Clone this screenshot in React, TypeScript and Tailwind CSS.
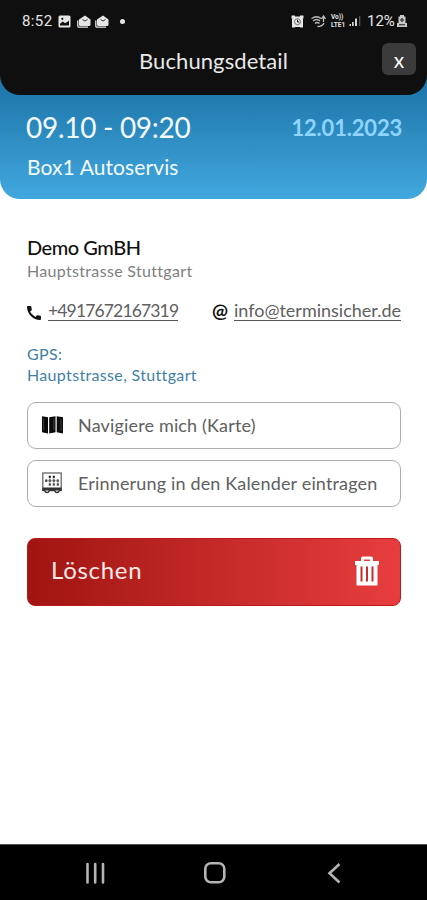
import type { ReactNode } from "react";

function StatusBar() {
  return (
    <div className="flex h-[42px] items-center justify-between pl-[22px] pr-[20px] font-['Roboto',sans-serif] text-[15px] text-[#e6e6e6]">
      <div className="flex items-center">
        <span className="w-[31px] tracking-[0.4px]">8:52</span>
        <svg className="ml-[5px]" width="13" height="13" viewBox="0 0 13 13" fill="#e6e6e6">
          <rect x="0.5" y="0.5" width="12" height="12" rx="1.5" />
          <path d="M2 10.5V8.8l2.8-2.2 2.3 1.7L11 5.8v4.7z" fill="#0f0f0f" />
          <circle cx="4.3" cy="3.8" r="1.1" fill="#0f0f0f" />
        </svg>
        <MailIcon className="ml-[6px]" />
        <MailIcon className="ml-[4px]" />
        <span className="ml-[11px] h-[5px] w-[5px] rounded-full bg-[#e6e6e6]" />
      </div>
      <div className="flex items-center">
        {/* alarm */}
        <svg width="13" height="13" viewBox="0 0 13 13" fill="#e6e6e6">
          <path d="M0.500 0.500h3.500v3H0.500zM9 0.500h3.500v3H9zM1 9.500h3v3H1zM9 9.500h3v3H9z" />
          <rect x="1" y="1.500" width="11" height="10.500" rx="3" />
          <circle cx="6.500" cy="6.700" r="3" fill="none" stroke="#555" strokeWidth="0.800" />
          <path d="M6.500 4.800v2.200h1.800" fill="none" stroke="#0f0f0f" strokeWidth="1" />
        </svg>
        {/* wifi calling */}
        <svg className="ml-[7px]" width="15" height="13" viewBox="0 0 15 13" fill="none" stroke="#bdbdbd" strokeWidth="1.300">
          <path d="M0.500 3.500Q6 0 10 3.500M2 6Q6 3 9 6M4 8.500Q6 6.500 8.500 8.500M6.500 11.500q5 0 6.500-3.500" />
          <path d="M12.500 1v6M10.500 4l2-3 2 3" />
        </svg>
        <span className="ml-[5px] flex w-[17px] flex-col text-[6.500px] leading-[8px] font-bold">
          <span>Vo))</span>
          <span>LTE1</span>
        </span>
        <svg className="ml-px" width="12" height="12" viewBox="0 0 12 12" fill="#d5d5d5">
          <path d="M0.500 9H2v2H0.500zM3 7h1.700v4H3zM6 3.500h2V11H6z" />
          <path d="M10 1h1.300v10H10z" fill="#555" />
        </svg>
        <span className="ml-[6px] w-[30px]">12%</span>
        <svg width="10" height="13" viewBox="0 0 10 13" fill="#c8c8c8">
          <path d="M3 0h4v1.500h1.500V8H10v4H0V8h1.500V1.500H3z" />
          <path d="M5 3v4M3 5h4M2 9.800h6" stroke="#202020" strokeWidth="1.100" />
        </svg>
      </div>
    </div>
  );
}

function MailIcon({ className }: { className: string }) {
  return (
    <svg className={className} width="14" height="13" viewBox="0 0 14 13" fill="#e6e6e6">
      <path d="M2 4.500L8 0.500l5.500 4V9.500a1.500 1.500 0 0 1-1.500 1.500H3.500a1.500 1.500 0 0 1-1.500-1.500z" />
      <path d="M0.800 5.500v5.500a1.200 1.200 0 0 0 1.200 1.200H11" fill="none" stroke="#e6e6e6" strokeWidth="1.300" />
      <path d="M5.500 4.500l2.500 1.500 2.500-1.500" fill="none" stroke="#333" strokeWidth="1" />
    </svg>
  );
}

function MapIcon() {
  return (
    <svg width="21" height="18" viewBox="0 0 21 18" fill="#0b0b0b">
      <path d="M0 0.300l6 1v16.200l-6-1.200zM7.200 1.300L13.500 0.300v16l-6.300 1.200zM14.700 0.300l6.300 1v16.200l-6.300-1.200z" />
      <path d="M1.700 2.500v11.500M11.800 2.500v11.500M19 3v12" stroke="#666" strokeWidth="0.600" />
    </svg>
  );
}

function CalendarIcon() {
  return (
    <svg width="20" height="22" viewBox="0 0 20 22">
      <rect x="0.800" y="1" width="18.400" height="17" fill="#fff" stroke="#666" strokeWidth="1.300" />
      <path d="M6.800 4.800h2M10.800 4.800h2M3.200 8.700h2M6.800 8.700h2M10.800 8.700h2M14.800 8.700h2M6.800 12.500h2M10.800 12.500h2M14.800 12.500h2" stroke="#111" strokeWidth="2.200" />
      <path d="M3.500 8.700h13M7.800 5v9M11.800 5v9M15.800 8v6" stroke="#777" strokeWidth="0.700" />
      <path d="M0.300 15.500h19.400v3.700H0.300z" fill="#333" />
      <path d="M3 18.500a2 2 0 0 0 4 0M13 18.500a2 2 0 0 0 4 0" fill="#fff" stroke="#333" strokeWidth="1.400" />
    </svg>
  );
}

function ActionButton({ icon, children }: { icon: ReactNode; children: ReactNode }) {
  return (
    <button className="flex h-[47px] w-full items-center rounded-[9px] border border-[#adadad] bg-white pl-[14px] text-left text-[18px] tracking-[0.16px] text-[#606060]">
      <span className="-mt-[2px] flex w-[36px] shrink-0">{icon}</span>
      <span className="pb-px">{children}</span>
    </button>
  );
}

export default function App() {
  return (
    <div className="flex h-[900px] w-[427px] flex-col overflow-hidden bg-white font-['Lato',sans-serif] whitespace-nowrap [font-variant-ligatures:none]">
      <header className="h-[199px] rounded-b-[20px] bg-linear-to-b from-[#1f78ab] from-45% to-[#41a8df]">
        <div className="h-[95px] rounded-b-[20px] bg-[#0f0f0f]">
          <StatusBar />
          <div className="grid grid-cols-[1fr_auto_1fr] items-start pr-[11px]">
            <h1 className="col-start-2 ml-[11px] pt-[5px] text-[22px] leading-[28px] tracking-[0.1px] text-[#e8e8e8]">
              Buchungsdetail
            </h1>
            <button className="mt-px flex h-[32px] w-[34px] items-center justify-center justify-self-end rounded-[6px] bg-[#3b3b3b] pt-px text-[21px] leading-none text-white">
              x
            </button>
          </div>
        </div>
        <div className="flex items-start justify-between pt-[16px] pr-[25px] pl-[26px] text-[#f3faff]">
          <div>
            <div className="text-[28px] leading-[33px] tracking-[-0.3px]">09.10 - 09:20</div>
            <div className="mt-[9px] pl-px text-[21px] leading-[28px] tracking-[0.1px]">Box1 Autoservis</div>
          </div>
          <div className="text-[22px] leading-[33px] font-bold tracking-[-0.2px] text-[#8fd4ff]">12.01.2023</div>
        </div>
      </header>

      <main className="flex flex-1 flex-col pt-[35px] pr-[26px] pl-[27px] text-[#606060]">
        <h2 className="text-[20px] leading-[26px] font-medium tracking-[-0.45px] text-[#111]">Demo GmBH</h2>
        <p className="text-[16px] leading-[22px] tracking-[0.32px] text-[#808080]">Hauptstrasse Stuttgart</p>

        <div className="mt-[19px] flex items-center justify-between">
          <div className="flex items-center">
            <svg className="mt-[3px]" width="14" height="14" viewBox="3 3 18 18" fill="#111">
              <path d="M20.010 15.380c-1.230 0-2.420-.2-3.530-.56a.977.977 0 0 0-1.010.24l-1.570 1.970c-2.830-1.350-5.480-3.900-6.890-6.830l1.950-1.660c.27-.28.35-.67.24-1.020-.37-1.110-.56-2.300-.56-3.530 0-.54-.45-.99-.99-.99H4.190C3.650 3 3 3.240 3 3.990 3 13.280 10.730 21 20.010 21c.71 0 .99-.63.99-1.180v-3.450c0-.54-.45-.99-.99-.99z" />
            </svg>
            <span className="ml-[7px] border-b border-[#555] text-[17.500px] leading-[19px] tracking-[-0.850px]">
              +4917672167319
            </span>
          </div>
          <div className="flex items-center">
            <span className="text-[19px] leading-[20px] font-bold text-[#111]">@</span>
            <span className="ml-[6px] border-b border-[#555] text-[18px] leading-[19px]">info@terminsicher.de</span>
          </div>
        </div>

        <p className="mt-[22px] text-[16px] leading-[21px] tracking-[0.34px] text-[#427fa6]">
          GPS:
          <br />
          Hauptstrasse, Stuttgart
        </p>

        <div className="mt-[17px] flex flex-col gap-[11px]">
          <ActionButton icon={<MapIcon />}>Navigiere mich (Karte)</ActionButton>
          <ActionButton icon={<CalendarIcon />}>Erinnerung in den Kalender eintragen</ActionButton>
        </div>

        <button className="mt-[31px] flex h-[68px] items-center justify-between rounded-[8px] border border-[#bf1818] bg-linear-to-r from-[#a01410] to-[#e83d3e] pr-[21px] pl-[23px] text-[#ffe9e7]">
          <span className="pb-[4px] text-[24px] tracking-[0.7px]">Löschen</span>
          <svg className="-mt-[2px]" width="24" height="30" viewBox="0 0 24 30" fill="#fff">
            <path d="M0 5h6V2.500A2 2 0 0 1 8 0.500h8a2 2 0 0 1 2 2V5h6v4h-1.500v20.500h-21V9H0zM9 3.500V5h6V3.500z" fillRule="evenodd" />
            <path d="M6.500 10.500v15M12 10.500v15M17.500 10.500v15" stroke="#c92c2c" strokeWidth="2" />
          </svg>
        </button>
      </main>

      <nav className="flex h-[56px] border-t border-[#555] bg-black">
        <svg width="427" height="55" viewBox="0 845 427 55" fill="none" stroke="#b4b4b4" strokeWidth="2.600">
          <path d="M87.500 864v18.500M95.200 864v18.500M103 864v18.500" strokeLinecap="round" />
          <rect x="205.300" y="863.300" width="19" height="19" rx="5.500" />
          <path d="M339.500 864l-10 9.200 10 9.300" />
        </svg>
      </nav>
    </div>
  );
}
